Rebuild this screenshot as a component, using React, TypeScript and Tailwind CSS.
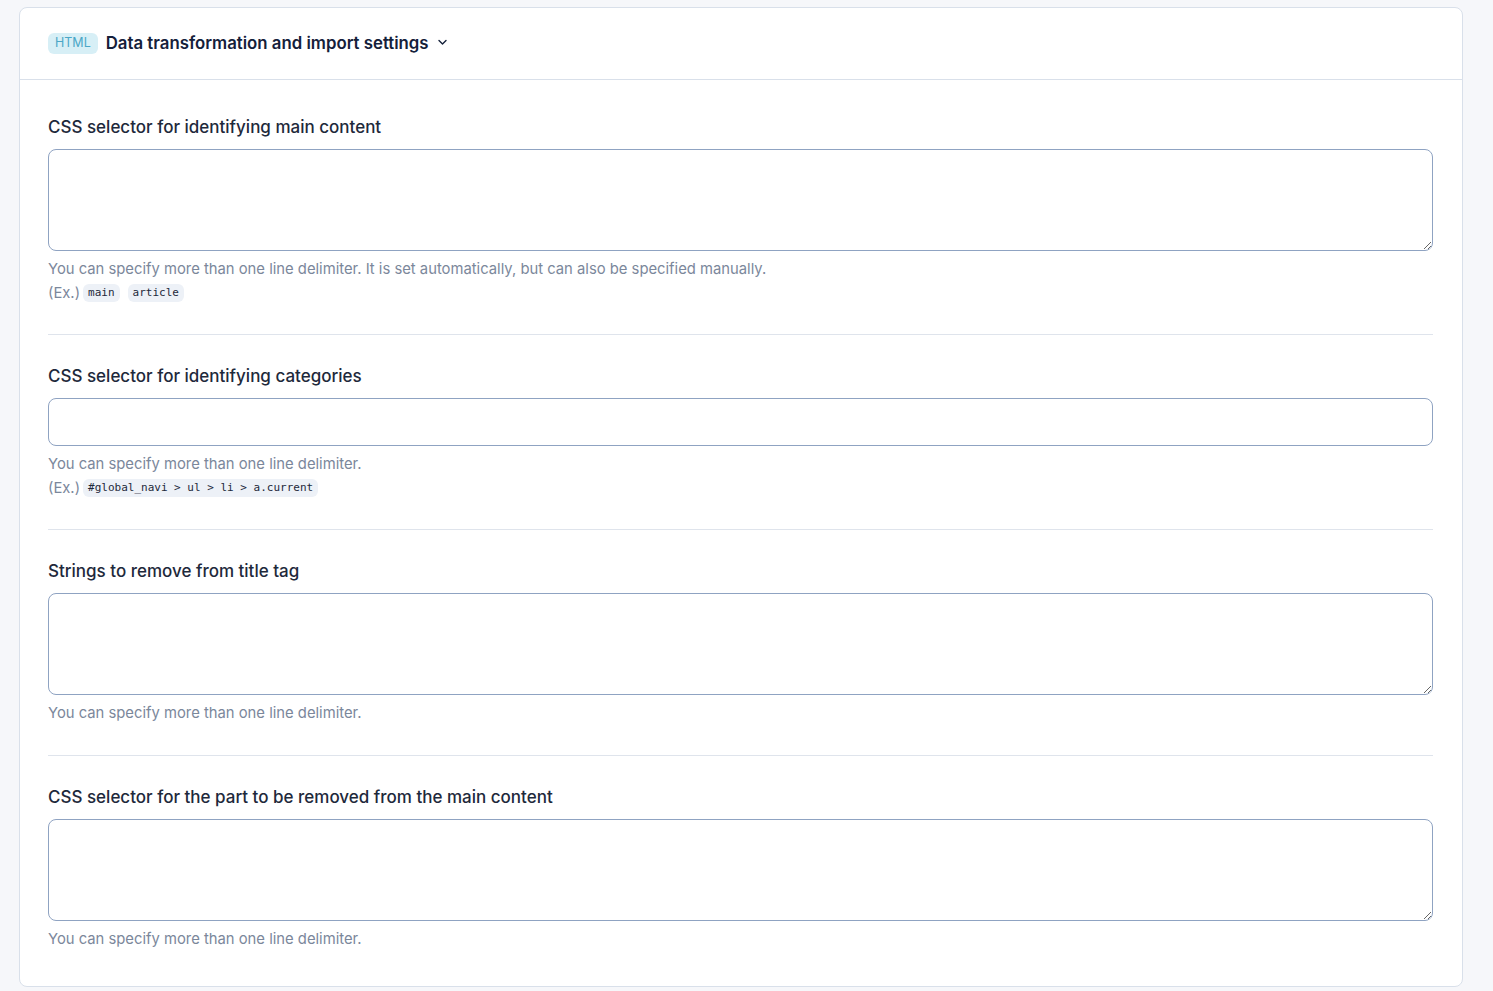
import React from "react";

const font = { fontFamily: "Inter, 'Noto Sans', sans-serif" };

function Code({ children }: { children: React.ReactNode }) {
  return (
    <code className="inline-flex h-[18px] items-center rounded-md bg-[#edf1f7] px-[5px] text-[11px] text-[#1e293b] [font-family:'DejaVu_Sans_Mono',monospace]">
      {children}
    </code>
  );
}

function Field({
  label,
  rows,
  help,
  ex,
  last,
  pb,
}: {
  label: string;
  rows: "area" | "input";
  help: string;
  ex?: React.ReactNode;
  last?: boolean;
  pb?: string;
}) {
  return (
    <div className={last ? "pt-[28px] pb-[37px]" : `pt-[28px] border-b border-[#dfe4ec] ${pb ?? "pb-[30px]"}`}>
      <div className="text-[17px] leading-[26px] font-medium text-[#1e293b]">{label}</div>
      {rows === "area" ? (
        <textarea className="mt-[9px] block h-[102px] w-full resize-y rounded-lg border border-[#8fa3c2] bg-white outline-none" />
      ) : (
        <input className="mt-[9px] block h-[48px] w-full rounded-lg border border-[#8fa3c2] bg-white outline-none" />
      )}
      <div className="mt-[8px] text-[14.8px] leading-5 text-[#7b879b]">{help}</div>
      {ex && (
        <div className="mt-[3px] flex h-[22px] items-center gap-[8px] text-[14.8px] text-[#7b879b]">
          <span className="-mr-[5px]">(Ex.)</span>
          {ex}
        </div>
      )}
    </div>
  );
}

export default function App() {
  return (
    <div style={font} className="min-h-[991px] w-full bg-[#f6f7fa] px-[19px] pt-[7px] pb-[4px]">
      <div className="w-[1444px] rounded-lg border border-[#d9e0ea] bg-white">
        <div className="flex h-[72px] items-center gap-[8px] border-b border-[#d9e0ea] px-[28px]">
          <span className="inline-flex h-[21px] items-center rounded-md bg-[#d7eff6] px-[7px] text-[12.5px] text-[#4ba7c7]">
            HTML
          </span>
          <span className="text-[16.8px] font-semibold text-[#14203a]">Data transformation and import settings</span>
          <svg width="13" height="12" viewBox="0 0 13 12" className="-ml-[1px] -mt-[4px]">
            <path d="M3 4.5 L6.5 8 L10 4.5" fill="none" stroke="#14203a" strokeWidth="1.4" strokeLinecap="round" strokeLinejoin="round" />
          </svg>
        </div>
        <div className="pl-[28px] pr-[29px] pt-[6px]">
          <Field
            label="CSS selector for identifying main content"
            rows="area"
            help="You can specify more than one line delimiter. It is set automatically, but can also be specified manually."
            ex={
              <>
                <Code>main</Code>
                <Code>article</Code>
              </>
            }
          />
          <Field
            label="CSS selector for identifying categories"
            rows="input"
            help="You can specify more than one line delimiter."
            ex={<Code>#global_navi &gt; ul &gt; li &gt; a.current</Code>}
          />
          <Field
            label="Strings to remove from title tag"
            rows="area"
            help="You can specify more than one line delimiter."
            pb="pb-[32px]"
          />
          <Field
            label="CSS selector for the part to be removed from the main content"
            rows="area"
            help="You can specify more than one line delimiter."
            last
          />
        </div>
      </div>
    </div>
  );
}
